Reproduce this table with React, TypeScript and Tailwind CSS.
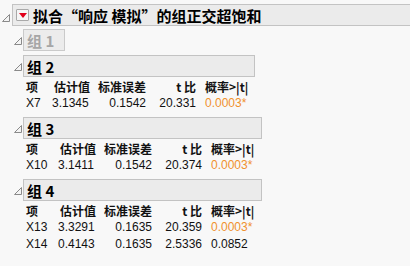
import React from "react";

const FONT = '"Liberation Sans", "Noto Sans CJK SC", sans-serif';
const CJK = '"Noto Sans CJK SC", "Liberation Sans", sans-serif';

function Tri() {
  return (
    <svg width="8" height="8" viewBox="0 0 8 8" className="block">
      <polygon points="7.5,0.5 7.5,7.5 0.5,7.5" fill="#f4f4f4" stroke="#8a8a8a" strokeWidth="1" />
    </svg>
  );
}

function RedBtn() {
  return (
    <div className="w-[13px] h-[12px] border border-[#a9a9a9] rounded-[1px] bg-[#f6f6f6] flex items-center justify-center">
      <svg width="8" height="5" viewBox="0 0 8 5" className="block">
        <polygon points="0,0 8,0 4,5" fill="#e1001a" />
      </svg>
    </div>
  );
}

type Row = { term: string; est: string; se: string; t: string; p: string; sig: boolean };

function Table({ rows, wide }: { rows: Row[]; wide: boolean }) {
  return (
    <div
      className={
        "grid pt-[1px] text-[12px] leading-[17px] text-[#111] " +
        (wide ? "grid-cols-[35px_44px_52px_50px_auto]" : "grid-cols-[29px_44px_52px_50px_auto]")
      }
      style={{ fontFamily: FONT }}
    >
      <div className="font-bold pl-[3px]" style={{ fontFamily: CJK }}>项</div>
      <div className="font-bold pl-[2px]" style={{ fontFamily: CJK }}>估计值</div>
      <div className="font-bold text-right pr-[2px]" style={{ fontFamily: CJK }}>标准误差</div>
      <div className="font-bold text-right pr-[2px]" style={{ fontFamily: CJK }}>t 比</div>
      <div className="font-bold pl-[7px] whitespace-nowrap" style={{ fontFamily: CJK }}>概率&gt;|t|</div>
      {rows.map((r) => (
        <React.Fragment key={r.term}>
          <div className="pl-[3px]">{r.term}</div>
          <div>{r.est}</div>
          <div className="text-right pr-[2px]">{r.se}</div>
          <div className="text-right pr-[2px]">{r.t}</div>
          <div className={"pl-[7px] whitespace-nowrap " + (r.sig ? "text-[#f0912e]" : "")}>
            {r.p}
            {r.sig ? "*" : ""}
          </div>
        </React.Fragment>
      ))}
    </div>
  );
}

function Group({
  title,
  rows,
  width,
  disabled,
  wide,
}: {
  title: string;
  rows?: Row[];
  width: number;
  disabled?: boolean;
  wide?: boolean;
}) {
  return (
    <div className="flex">
      <div className="w-[11px] h-[22px] flex items-end pb-[6px] pl-[2px] shrink-0">
        <Tri />
      </div>
      <div>
        <div
          className={
            "h-[22px] flex items-center pl-[3px] text-[15px] font-bold leading-none border " +
            (disabled ? "border-[#cacaca] bg-[#ececec] text-[#a6a6a6]" : "border-[#c3c3c3] bg-[#ebebeb] text-black")
          }
          style={{ width, fontFamily: CJK }}
        >
          {title}
        </div>
        {rows && <Table rows={rows} wide={!!wide} />}
      </div>
    </div>
  );
}

export default function App() {
  return (
    <div className="w-[410px] h-[266px] overflow-hidden bg-[#f8f8f8] pt-[4px]" style={{ fontFamily: FONT }}>
      <div className="flex">
        <div className="w-[12px] h-[22px] flex items-end pb-[4px] pl-[2px] shrink-0">
          <Tri />
        </div>
        <div className="h-[22px] w-[420px] shrink-0 border border-r-0 border-[#c3c3c3] bg-[#ebebeb] flex items-center pl-[3px]">
          <RedBtn />
          <span className="ml-[4px] text-[15px] font-bold leading-none text-black" style={{ fontFamily: CJK }}>
            拟合“响应 模拟”的组正交超饱和
          </span>
        </div>
      </div>
      <div className="pl-[12px] mt-[3px] flex flex-col">
        <Group title="组 1" width={42} disabled />
        <div className="mt-[4px]">
          <Group
            title="组 2"
            width={232}
            rows={[{ term: "X7", est: "3.1345", se: "0.1542", t: "20.331", p: "0.0003", sig: true }]}
          />
        </div>
        <div className="mt-[5px]">
          <Group
            title="组 3"
            width={239}
            wide
            rows={[{ term: "X10", est: "3.1411", se: "0.1542", t: "20.374", p: "0.0003", sig: true }]}
          />
        </div>
        <div className="mt-[5px]">
          <Group
            title="组 4"
            width={239}
            wide
            rows={[
              { term: "X13", est: "3.3291", se: "0.1635", t: "20.359", p: "0.0003", sig: true },
              { term: "X14", est: "0.4143", se: "0.1635", t: "2.5336", p: "0.0852", sig: false },
            ]}
          />
        </div>
      </div>
    </div>
  );
}
